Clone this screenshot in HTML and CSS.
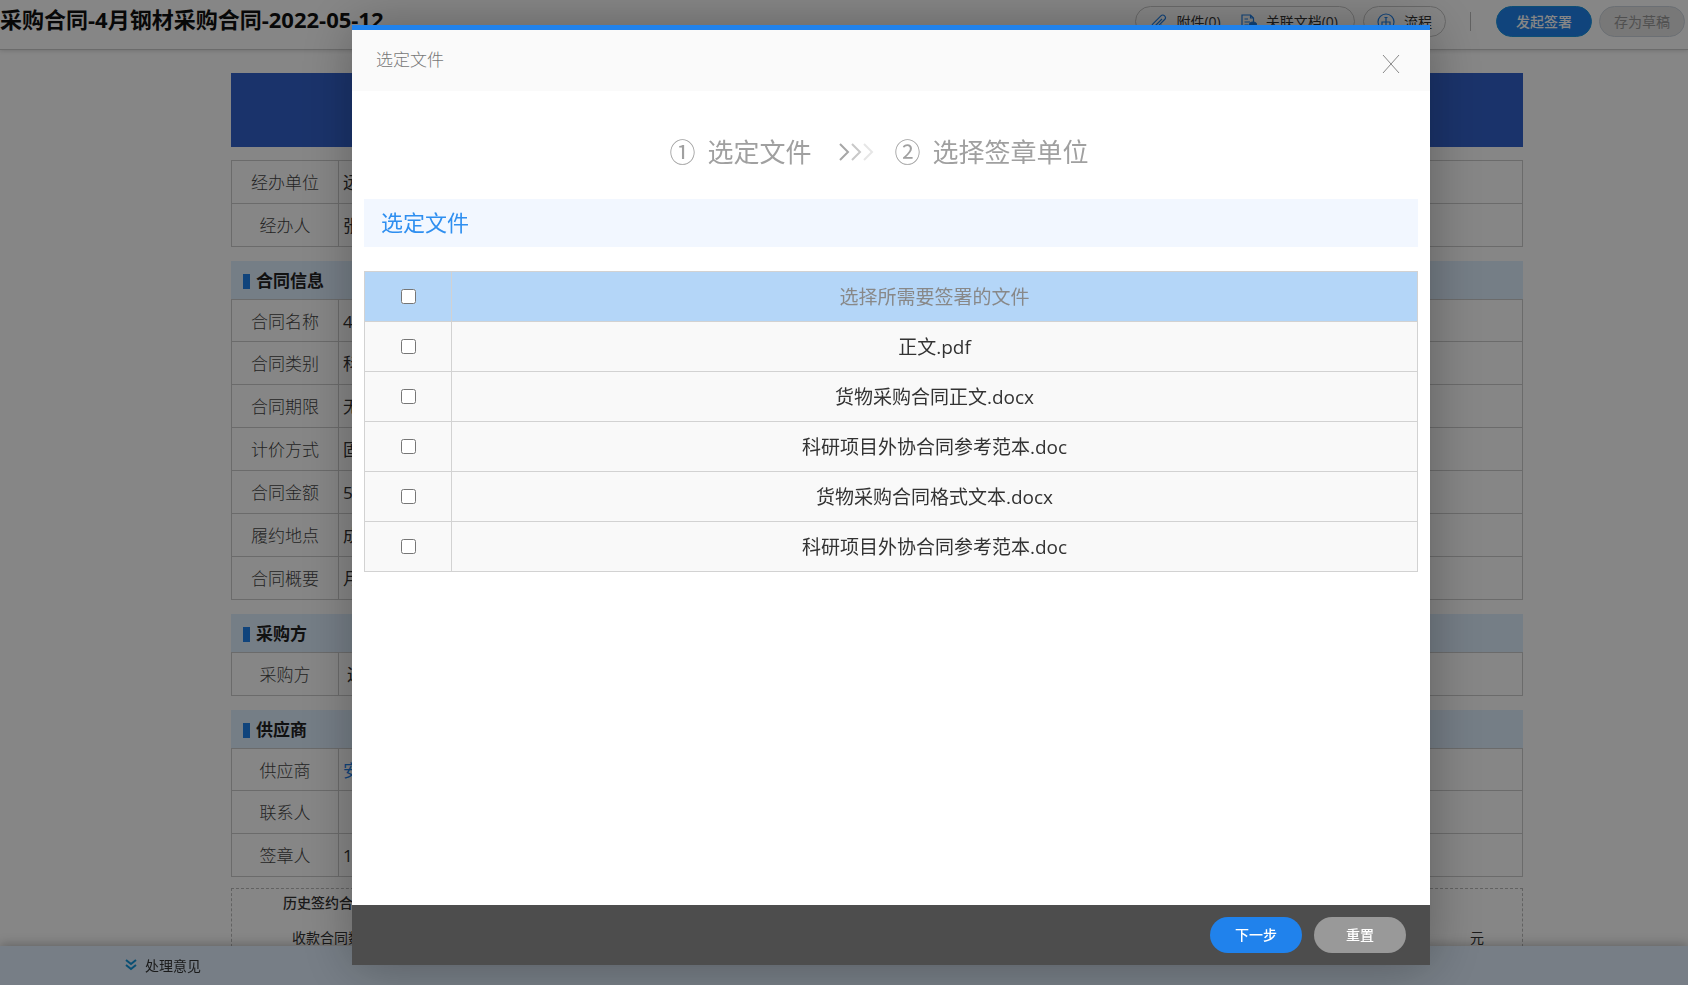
FILE: index.html
```html
<!DOCTYPE html>
<html lang="zh-CN">
<head>
  <meta charset="utf-8">
  <title>采购合同-4月钢材采购合同-2022-05-12</title>
  <link rel="stylesheet" href="styles.css">
</head>
<body>
  <header class="topbar">
    <h1>采购合同-4月钢材采购合同-2022-05-12</h1>
    <div class="tools">
      <div class="pill">
        <a href="#">
          <svg width="16" height="16" viewBox="0 0 16 16"><path d="M11 5l-6.500 6.500a1.100 1.100 0 0 0 1.600 1.600l7.500-7.600a2.600 2.600 0 0 0-3.700-3.700l-8 8a3.500 3.500 0 0 0 5 5l4-4"/></svg>
          附件(0)
        </a>
        <a href="#">
          <svg width="16" height="16" viewBox="0 0 16 16"><path d="M7 15H1V1h8.500l3 3v4M9.500 1v3h3M3.500 5H7M3.500 8H9M3.500 11H7"/><circle class="fill" cx="12" cy="12" r="4"/></svg>
          关联文档(0)
        </a>
      </div>
      <div class="pill">
        <a href="#">
          <svg width="18" height="18" viewBox="0 0 18 18"><circle cx="9" cy="9" r="8"/><path d="M9 4v9M5 13V9h8v4M3.500 13h3M7.500 13h3M11.500 13h3M7.500 4.500h3"/></svg>
          流程
        </a>
      </div>
      <span class="divider"></span>
      <button class="btn-sign" type="button">发起签署</button>
      <button class="btn-draft" type="button">存为草稿</button>
    </div>
  </header>

  <main class="doc">
    <div class="banner"></div>

    <table class="form">
      <tr><th>经办单位</th><td>远</td></tr>
      <tr><th>经办人</th><td>张</td></tr>
    </table>

    <h2 class="section">合同信息</h2>
    <table class="form">
      <tr><th>合同名称</th><td>4</td></tr>
      <tr><th>合同类别</th><td>科</td></tr>
      <tr><th>合同期限</th><td>无</td></tr>
      <tr><th>计价方式</th><td>固</td></tr>
      <tr><th>合同金额</th><td>5</td></tr>
      <tr><th>履约地点</th><td>成</td></tr>
      <tr><th>合同概要</th><td>月</td></tr>
    </table>

    <h2 class="section">采购方</h2>
    <table class="form">
      <tr><th>采购方</th><td class="indent">远</td></tr>
    </table>

    <h2 class="section">供应商</h2>
    <table class="form">
      <tr><th>供应商</th><td><a href="#">安</a></td></tr>
      <tr><th>联系人</th><td></td></tr>
      <tr><th>签章人</th><td>1</td></tr>
    </table>

    <div class="history">
      <h3>历史签约合</h3>
      <p><span>收款合同数</span><span>元</span></p>
    </div>
  </main>

  <footer class="opinion">
    <svg width="12" height="12" viewBox="0 0 12 12"><path d="M1 1l5 4 5-4M1 6l5 4 5-4"/></svg>
    处理意见
  </footer>

  <div class="shade"></div>

  <div class="dialog" role="dialog" aria-labelledby="dialog-title">
    <div class="dialog-head">
      <span id="dialog-title">选定文件</span>
      <button class="close" type="button" aria-label="关闭">
        <svg width="18" height="20" viewBox="0 0 18 20"><path d="M1 1l16 18M17 1L1 19"/></svg>
      </button>
    </div>
    <div class="dialog-body">
      <div class="steps">
        <span class="num">①</span><span>选定文件</span>
        <svg width="36" height="20" viewBox="0 0 36 20">
          <path stroke="#a6a6a6" d="M2 2l8 8-8 8"/>
          <path stroke="#c8c8c8" d="M14 2l8 8-8 8"/>
          <path stroke="#e6e6e6" d="M26 2l8 8-8 8"/>
        </svg>
        <span class="num">②</span><span>选择签章单位</span>
      </div>
      <h2 class="caption">选定文件</h2>
      <table class="files">
        <thead>
          <tr><th class="check"><input type="checkbox" id="all"></th><th><label for="all">选择所需要签署的文件</label></th></tr>
        </thead>
        <tbody>
          <tr><td class="check"><input type="checkbox" id="f1"></td><td><label for="f1">正文.pdf</label></td></tr>
          <tr><td class="check"><input type="checkbox" id="f2"></td><td><label for="f2">货物采购合同正文.docx</label></td></tr>
          <tr><td class="check"><input type="checkbox" id="f3"></td><td><label for="f3">科研项目外协合同参考范本.doc</label></td></tr>
          <tr><td class="check"><input type="checkbox" id="f4"></td><td><label for="f4">货物采购合同格式文本.docx</label></td></tr>
          <tr><td class="check"><input type="checkbox" id="f5"></td><td><label for="f5">科研项目外协合同参考范本.doc</label></td></tr>
        </tbody>
      </table>
    </div>
    <div class="dialog-foot">
      <button class="next" type="button">下一步</button>
      <button class="reset" type="button">重置</button>
    </div>
  </div>

  <script>
    // header box ticks every file
    var all = document.querySelector('#all');
    all.onchange = function () {
      document.querySelectorAll('.files tbody input').forEach(function (box) {
        box.checked = all.checked;
      });
    };
  </script>
</body>
</html>
```
FILE: styles.css
```css
* { box-sizing:border-box; }
html, body { height:100%; margin:0; }
body {
  overflow:hidden;
  background:#fff; color:#333;
  font-family:"Open Sans", "Noto Sans CJK SC", sans-serif; font-size:14px;
}
h1, h2, h3, p { margin:0; }
a { color:inherit; text-decoration:none; }
button { border:none; padding:0; font:inherit; cursor:pointer; }
svg { fill:none; flex:none; }
table { border-collapse:collapse; width:100%; }

/* top bar */
.topbar {
  display:flex; justify-content:space-between;
  height:50px; padding-right:3px;
  border-bottom:1px solid #ccc; box-shadow:0 1px 4px rgba(0,0,0,.15);
}
.topbar h1 { color:#111; font-size:22px; line-height:38px; white-space:nowrap; }
.tools { display:flex; align-items:center; height:31px; margin-top:6px; }
.pill {
  display:flex; align-items:center; gap:20px;
  height:31px; margin-right:8px; padding:0 16px 0 15px;
  border:1px solid #c8c8c8; border-radius:16px;
}
.pill + .pill { padding:0 13px; }
.pill a { display:flex; align-items:center; gap:9px; line-height:28px; white-space:nowrap; }
.pill svg { stroke:#2082ec; stroke-width:1.2; }
.pill .fill { fill:#2082ec; }
.divider { width:1px; height:19px; margin:0 25px 0 16px; background:#bbb; }
.btn-sign, .btn-draft { height:31px; border-radius:16px; padding-bottom:2px; }
.btn-sign { width:96px; margin-right:7px; background:#2082ec; border:1px solid #1a96e0; color:#fff; font-weight:500; }
.btn-draft { width:86px; background:#e4e4e4; border:1px solid #ccd4dc; color:#999; }

/* contract form */
.doc { padding:23px 165px 0 231px; }
.banner { height:74px; margin-bottom:13px; background:#3362cc; }
.form { margin-bottom:14px; }
.form th, .form td { height:43px; padding:2px 0 0; border:1px solid #ccc; font-size:17px; line-height:24px; }
.section + .form tr:first-child:not(:last-child) > * { height:42px; }
.form th { width:107px; color:#444; font-weight:300; }
.form td { padding-left:4px; }
.form .indent { padding-left:8px; }
.form a { color:#2082ec; }
.section {
  display:flex; align-items:center; gap:6px;
  height:38px; padding:2px 0 0 12px;
  background:#dfefff; color:#222; font-size:17px; line-height:24px;
}
.section::before { content:""; width:7px; height:15px; background:#2082ec; }
.history { margin-top:-3px; height:120px; border:1px dashed #bbb; padding:0 38px 0 51px; }
.history h3 { font-size:14px; font-weight:500; line-height:28px; }
.history p { display:flex; justify-content:space-between; padding-left:9px; line-height:42px; }

.opinion {
  position:fixed; left:0; right:0; bottom:0;
  display:flex; align-items:center; gap:8px;
  height:39px; padding:0 0 2px 125px;
  background:#e2f0ff; box-shadow:0 -2px 10px rgba(0,0,0,.25);
}
.opinion svg { stroke:#1296db; stroke-width:2; }

/* dialog */
.shade { position:fixed; inset:0; background:rgba(0,0,0,.475); }
.dialog {
  position:fixed; top:25px; right:258px; bottom:20px; left:352px;
  display:flex; flex-direction:column;
  border-top:5px solid #2082ec; background:#fff;
  box-shadow:1px 1px 50px rgba(0,0,0,.3);
}
.dialog-head {
  display:flex; justify-content:space-between;
  height:61px; padding:0 30px 0 24px;
  background:#fafafa; color:#777; font-size:17px; font-weight:300; line-height:60px;
}
.close { display:flex; align-items:center; height:68px; background:none; }
.close svg { stroke:#888; }
.dialog-body { flex:1; padding:0 12px; }
.steps {
  display:flex; justify-content:center; align-items:center;
  height:108px; padding:14px 24px 0 0;
  color:#a0a0a0; font-size:26px; line-height:40px;
}
.steps .num { margin-right:12px; }
.steps svg { margin:0 21px 0 26px; stroke-width:2; }
.caption {
  height:48px; padding-left:17px; margin-bottom:24px;
  background:#f2f7ff; color:#2f8ff0; font-size:22px; font-weight:400; line-height:46px;
}
.files th, .files td {
  height:50px; padding:0; border:1px solid #d2d2d2;
  font-size:19px; font-weight:400; line-height:28px; text-align:center;
}
.files th { background:#b4d6f8; color:#888; }
.files td { background:#f9f9f9; }
.files .check { width:87px; }
.files input { display:block; width:15px; height:15px; margin:0 auto; }
.dialog-foot {
  display:flex; justify-content:flex-end; align-items:center; gap:12px;
  height:60px; padding-right:24px;
  background:#4d4d4d;
}
.dialog-foot button { width:92px; height:36px; border-radius:18px; color:#fff; font-weight:500; line-height:34px; }
.next { background:#2082ec; }
.reset { background:#999; }
```
